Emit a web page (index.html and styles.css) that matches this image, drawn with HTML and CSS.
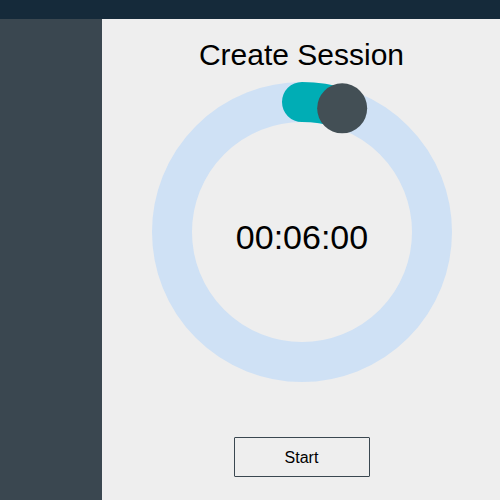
FILE: index.html
```html
<!DOCTYPE html>
<html>
<head>
<meta charset="utf-8">
<link rel="stylesheet" href="styles.css">
</head>
<body>
<header class="topbar"></header>
<div class="layout">
  <aside class="sidebar"></aside>
  <main class="main">
    <h1 class="title">Create Session</h1>
    <svg class="dial" width="300" height="300" viewBox="0 0 300 300">
      <circle cx="150" cy="150" r="130" fill="none" stroke="#cfe1f5" stroke-width="40"/>
      <path d="M150 20 A130 130 0 0 1 190.17 26.36" fill="none" stroke="#00adb5" stroke-width="40" stroke-linecap="round"/>
      <circle cx="190.17" cy="26.36" r="25" fill="#434f55"/>
      <text x="150" y="167" text-anchor="middle" class="time">00:06:00</text>
    </svg>
    <button class="start">Start</button>
  </main>
</div>
</body>
</html>
```
FILE: styles.css
```css
html, body {
  margin: 0;
  padding: 0;
  height: 100%;
}
body {
  font-family: "Liberation Sans", Arial, sans-serif;
  background: #eeeeee;
  display: flex;
  flex-direction: column;
}
.topbar {
  height: 19px;
  background: #152a3a;
  flex: none;
}
.layout {
  flex: 1;
  display: flex;
}
.sidebar {
  width: 102px;
  background: #3a4750;
  flex: none;
}
.main {
  flex: 1;
  display: flex;
  flex-direction: column;
  align-items: center;
  padding-top: 19px;
  padding-left: 1px;
}
.title {
  margin: 0;
  font-size: 30px;
  font-weight: normal;
  line-height: 34px;
  color: #000;
}
.dial {
  display: block;
  margin-top: 10px;
}
.time {
  font-family: "Liberation Sans", Arial, sans-serif;
  font-size: 34px;
  fill: #000;
}
.start {
  margin-top: 55px;
  width: 136px;
  height: 40px;
  background: transparent;
  border: 1px solid #3a4750;
  border-radius: 1px;
  font-family: "Liberation Sans", Arial, sans-serif;
  font-size: 16px;
  color: #000;
  padding: 2px 0 0;
}
```
